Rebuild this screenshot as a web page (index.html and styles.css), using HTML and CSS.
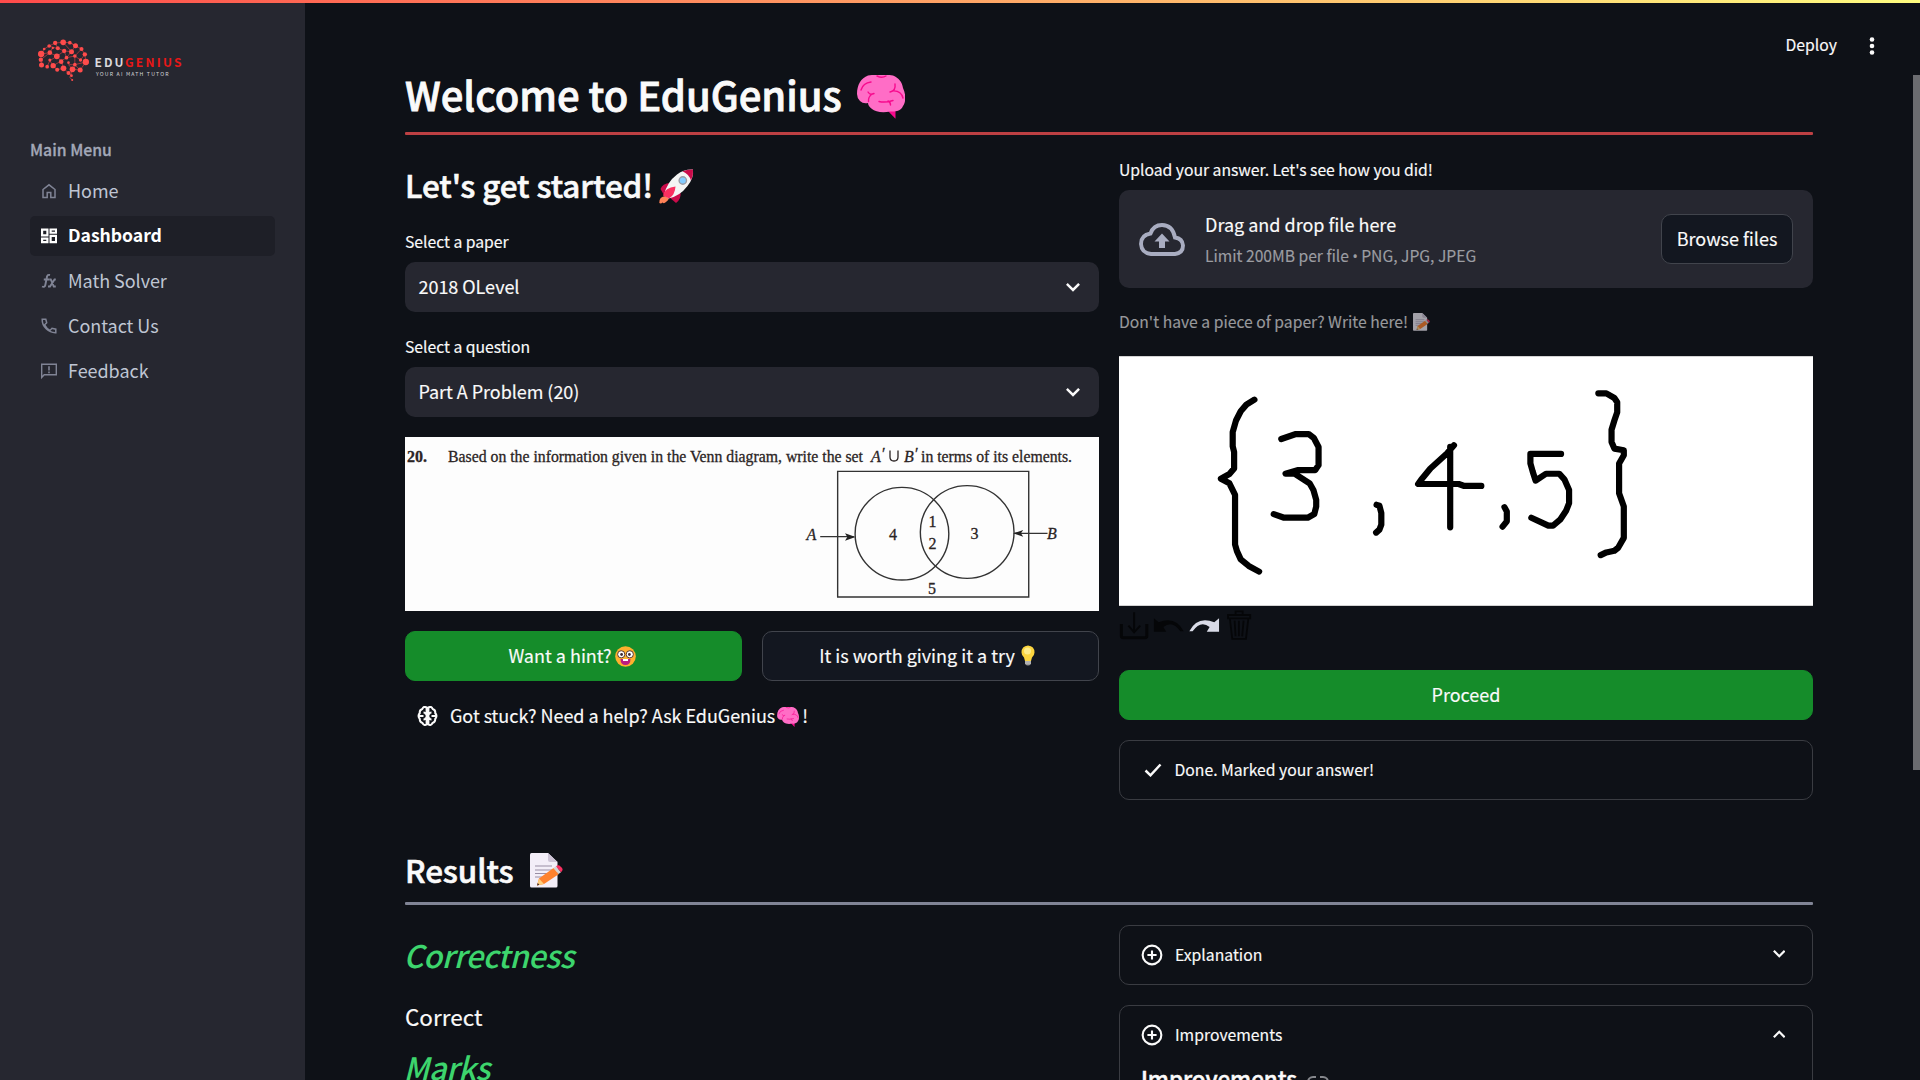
FILE: index.html
```html
<!DOCTYPE html>
<html lang="en">
<head>
<meta charset="utf-8">
<title>EduGenius</title>
<link rel="stylesheet" href="styles.css">
</head>
<body>
<svg class="defs" aria-hidden="true">
  <symbol id="brain" viewBox="0 0 48 44">
    <path d="M30 35l8.500 8.800V34z" fill="#f70a8d"/>
    <path d="M0 19C0 10 4 3 11 .5Q24-1.500 36 .5C42 3 45 7 46 13C49 19 49 27 46 31C44 36 38 37 33 36.500C26 38 18 37 15 34Q11 31 11 28Q6 29 3 26Q0 23 0 19Z" fill="#ff6dc6"/>
    <g fill="none" stroke="#f70a8d" stroke-width="1.400" stroke-linecap="round"><path d="M4 15Q6 8 14 7M20 1q5 2.500 9 0M11 17q2 3.500 6 1.500M15 19q-4 3-3.500 7.500M38 9q1 7-5 8M35 16q9-1 11 7M22 26.500q6 1.500 14-1M31 26q2.500 1 2.500 4"/></g>
  </symbol>
  <symbol id="memo" viewBox="0 0 33 35">
    <path d="M1.500 0H18l9.500 9v24q0 1.500-1.500 1.500H1.500Q0 34.500 0 33V1.500Q0 0 1.500 0z" fill="#f3eef8"/>
    <path d="M18 0l9.500 9H20q-2 0-2-2z" fill="#cdc4d6"/>
    <path d="M5 13h17M5 17h17M5 20.500h14M5 24h9" stroke="#998ea4" stroke-width="1"/>
    <path d="M7 32.500l2-7L23.500 15l5.500 6L14 31z" fill="#ff822d"/><path d="M7 32.500l2-7 5 5.500z" fill="#ffce7c"/><path d="M7 32.500l.7-2.500 1.700 1.800z" fill="#402a32"/>
    <path d="M23.500 15l2.500-1.800 5 6L28.500 21z" fill="#d3d3d3"/><path d="M26 13.200q2.500-2 4.500.2 4 3 .5 5.800z" fill="#f92f60"/>
  </symbol>
  <symbol id="plus" viewBox="0 0 24 24"><circle cx="12" cy="12" r="10.200" fill="none" stroke="#fafafa" stroke-width="2.300"/><path d="M12 7v10M7 12h10" stroke="#fafafa" stroke-width="2.300"/></symbol>
  <symbol id="chev" viewBox="0 0 14 9"><path d="M1.800 1.800L7 7l5.200-5.200" fill="none" stroke="#fafafa" stroke-width="2.500" stroke-linecap="square"/></symbol>
</svg>
<div class="strip"></div>
<div class="app">
  <aside class="sidebar">
    <svg class="logo" viewBox="0 0 150 50">
      <svg x="0" y="0" width="56" height="50" viewBox="48.500 16 168 150">
        <path d="M64 73L73 58L88 49L106 40L130 38L150 39L167 48L185 58L195 74L198 97L181 121L158 119L150 143L156 150M64 73L90 69L111 80L133 64L155 66L130 38M63 90L90 69L99 53L88 49M65 106L63 90M82 111L90 93L111 80L124 94L140 84L133 64L114 56L106 40M100 108L124 94L131 116L112 120L100 108L90 93M155 66L140 84L165 79L185 58M165 79L165 105L181 121M146 130L158 119L146 105L165 105L198 97M165 79L182 91L195 74M131 116L146 130L155 138M155 66L167 48L150 39M114 56L99 53" fill="none" stroke="#d94043" stroke-width="1.900"/>
        <g fill="#ff4b4b"><circle cx="64" cy="73" r="9.500"/><circle cx="73" cy="58" r="4"/><circle cx="88" cy="49" r="5.500"/><circle cx="106" cy="40" r="6.500"/><circle cx="130" cy="38" r="8.500"/><circle cx="150" cy="39" r="5.500"/><circle cx="167" cy="48" r="7.500"/><circle cx="185" cy="58" r="6"/><circle cx="195" cy="74" r="6.500"/><circle cx="198" cy="97" r="9.500"/><circle cx="181" cy="121" r="7.500"/><circle cx="158" cy="119" r="8.500"/><circle cx="146" cy="130" r="6"/><circle cx="131" cy="116" r="8.500"/><circle cx="112" cy="120" r="6"/><circle cx="100" cy="108" r="8"/><circle cx="82" cy="111" r="5.500"/><circle cx="65" cy="106" r="7.500"/><circle cx="63" cy="90" r="6.500"/><circle cx="90" cy="69" r="7"/><circle cx="99" cy="55" r="3.500"/><circle cx="114" cy="56" r="6"/><circle cx="133" cy="64" r="6.500"/><circle cx="155" cy="66" r="7.500"/><circle cx="111" cy="80" r="8.500"/><circle cx="90" cy="91" r="4.500"/><circle cx="124" cy="96" r="7"/><circle cx="140" cy="84" r="5.500"/><circle cx="165" cy="79" r="5.500"/><circle cx="182" cy="91" r="5"/><circle cx="165" cy="105" r="5.500"/><circle cx="146" cy="99" r="4"/><circle cx="155" cy="138" r="4"/><circle cx="157" cy="151" r="3"/></g>
      </svg>
      <text class="brand" x="58.500" y="32" textLength="29" fill="#d9d9dc">EDU</text>
      <text class="brand" x="89" y="32" textLength="56.500" fill="#e81717">GENIUS</text>
      <text class="tag" x="60" y="41" textLength="72.500">YOUR AI MATH TUTOR</text>
    </svg>
    <div class="menu-title">Main Menu</div>
    <nav class="menu">
      <a class="item"><svg viewBox="0 0 18 18"><path d="M3 7.500L9 2.800l6 4.700v8h-4.200v-5H7.200v5H3z" fill="none" stroke="currentColor" stroke-width="1.500"/></svg>Home</a>
      <a class="item active"><svg viewBox="0 0 18 18"><path fill-rule="evenodd" fill="currentColor" d="M1 1.500h7.500v8H1zM3.200 3.700v3.600h3.100v-3.600zM9.500 1.500H17v5.200H9.500zM11.700 3.500v1.200H15V3.500zM1 10.500h7.500v5.700H1zM3.200 12.700v1.300h3.100v-1.300zM9.500 7.800H17v8.400H9.500zM11.700 10v4H15v-4z"/></svg><span>Dashboard</span></a>
      <a class="item"><svg viewBox="0 0 18 18"><path d="M2 14.500q2.800 1.200 3.300-1.500L7 4.800Q7.400 2.300 10 3M3.800 7.500H9M9.200 7.500h1.600l3 7h2M15.800 7.500h-1.300l-4.500 7H8" fill="none" stroke="currentColor" stroke-width="1.900"/></svg>Math Solver</a>
      <a class="item"><svg viewBox="0 0 18 18"><path d="M2.200 2.200h3.600l.9 3.600-2.100 2q1.800 3.700 5.400 5.600l2-2.100 3.800.9v3.500C8.500 16 2 9.500 2.200 2.200z" fill="none" stroke="currentColor" stroke-width="1.500"/></svg>Contact Us</a>
      <a class="item"><svg viewBox="0 0 18 18"><path d="M1.700 15.500V2.200h14.600v10.600H4.200z" fill="none" stroke="currentColor" stroke-width="1.400"/><path d="M9 4.200v4.300M9 9.500v1.700" stroke="currentColor" stroke-width="1.600"/></svg>Feedback</a>
    </nav>
  </aside>
  <main class="main">
    <header class="toolbar"><span>Deploy</span><svg viewBox="0 0 6 20"><circle cx="3" cy="3.500" r="2.300"/><circle cx="3" cy="10" r="2.300"/><circle cx="3" cy="16.500" r="2.300"/></svg></header>
    <div class="content">
      <h1>Welcome to EduGenius <svg class="e-title"><use href="#brain"/></svg></h1>
      <div class="rule red"></div>
      <div class="cols">
        <section class="col">
          <h2 class="start">Let's get started!<svg class="e-rocket" viewBox="0 0 35 35"><path d="M6.500 27Q0 27.500 .3 34Q2 35 3.500 33.500Q5 35 7 33Q10 31 10 28z" fill="#ff8257"/><path d="M1.500 20Q3.500 14.500 11 14L9 24 5 26z" fill="#ca0b4a"/><path d="M10 28L21.500 23Q22.500 30 17 34z" fill="#ca0b4a"/><path d="M5 26Q8 13 18 5.500Q25 0 34 .5Q35 9 28.500 17Q21 27 9.500 29.500z" fill="#f4f4f4"/><path d="M23.500 2.200Q28.500 .2 34 .5Q34.700 6 32 11.500Q30 5 23.500 2.200z" fill="#ca0b4a"/><path d="M4 26.500Q6 18.500 16.500 17.500Q16 26 10 29.500z" fill="#f92f60"/><circle cx="23.800" cy="11.500" r="3.700" fill="#83cbff" stroke="#9a9ca5" stroke-width="1.400"/></svg></h2>
          <label>Select a paper</label>
          <div class="select">2018 OLevel<svg><use href="#chev"/></svg></div>
          <label class="second">Select a question</label>
          <div class="select">Part A Problem (20)<svg><use href="#chev"/></svg></div>
          <svg class="question" width="694" height="174">
            <svg width="694" height="174" viewBox="33 351 1511 522" preserveAspectRatio="none">
              <g class="ink"><path d="M975 454H1391V831H975z"/><ellipse cx="1115" cy="641" rx="102" ry="139"/><ellipse cx="1257" cy="636" rx="102" ry="139"/><path d="M937 650H1010M1360 640H1432"/></g>
              <path d="M1014 651l-23-11 5 11-5 11zM1357 640l22-10-5 10 5 10z" fill="#222"/>
            </svg>
            <text x="2" y="24.500" font-weight="bold" textLength="20">20.</text>
            <text x="43" y="24.500" textLength="415" lengthAdjust="spacingAndGlyphs">Based on the information given in the Venn diagram, write the set</text>
            <text x="466" y="24.500" font-style="italic">A</text><text x="477" y="21.500">′</text><path d="M485 13.500v6.500q0 4 4 4t4-4v-6.500" fill="none" stroke="#2b2424" stroke-width="1.300"/><text x="499" y="24.500" font-style="italic">B</text><text x="510" y="21.500">′</text>
            <text x="516" y="24.500" textLength="151" lengthAdjust="spacingAndGlyphs">in terms of its elements.</text>
            <g><text x="401.500" y="102.500" font-style="italic">A</text><text x="642" y="102" font-style="italic">B</text><text x="484" y="103">4</text><text x="523.500" y="90">1</text><text x="523.500" y="112">2</text><text x="565.500" y="102">3</text><text x="523" y="157">5</text></g>
          </svg>
          <div class="buttons">
            <button class="btn green">Want a hint?<svg class="e-nerd" viewBox="0 0 21 21"><circle cx="10.500" cy="10.500" r="10.300" fill="#ffb02e"/><path d="M5.500 13h10q0 6-5 6t-5-6z" fill="#bb1d80"/><path d="M8 13h5v2H8z" fill="#fff"/><circle cx="6.200" cy="8.300" r="3.600" fill="#fff" stroke="#5c3b2e" stroke-width="1"/><circle cx="14.800" cy="8.300" r="3.600" fill="#fff" stroke="#5c3b2e" stroke-width="1"/><circle cx="6.600" cy="8.500" r="1.400" fill="#402a32"/><circle cx="14.400" cy="8.500" r="1.400" fill="#402a32"/></svg></button>
            <button class="btn try">It is worth giving it a try<svg class="e-bulb" viewBox="0 0 14 21"><path d="M4 14h6v5q-3 3-6 0z" fill="#9b9b9b"/><path d="M4 16h6M4 18h6" stroke="#d3d3d3" stroke-width=".8"/><path d="M7 .5Q13.500 1 13.500 7.500Q13.500 10 11 12.500L10 16H4L3 12.500Q.5 10 .5 7.500Q.5 1 7 .5z" fill="#fcd53f"/><circle cx="6.500" cy="6" r="3.500" fill="#ffec8a"/></svg></button>
          </div>
          <div class="stuck"><svg class="i-brain" viewBox="0 0 20 20"><path d="M9.100 1.500Q6-.2 4.800 3Q1.800 4 2.300 7Q-.2 10 2.300 13Q2 16 5 17Q6.500 20 9.100 18.500zM10.900 1.500Q14-.2 15.200 3Q18.200 4 17.700 7Q20.200 10 17.700 13Q18 16 15 17Q13.500 20 10.900 18.500zM6 6.500q2 0 2.500 2M6 13.500q2 0 2.500-2M2 10h4M14 6.500q-2 0-2.500 2M14 13.500q-2 0-2.500-2M18 10h-4" fill="none" stroke="#fafafa" stroke-width="2"/></svg><span>Got stuck? Need a help? Ask EduGenius</span><svg class="e-small"><use href="#brain"/></svg><span>!</span></div>
        </section>
        <section class="col">
          <label class="upload-label">Upload your answer. Let's see how you did!</label>
          <div class="drop">
            <svg class="i-cloud" viewBox="0 0 46 33"><path d="M12 31H36Q44 30 44 22.500Q43.500 15.500 36 14.500Q33.500 2 23 2Q14.500 2 11.500 10.500Q2 12 2 21Q2.500 30 12 31z" fill="none" stroke="#a9adc1" stroke-width="3.900"/><path d="M23 10.500l7.500 8H26v6.500h-6v-6.500h-4.500z" fill="#a9adc1"/></svg>
            <div class="drop-text"><div>Drag and drop file here</div><small>Limit 200MB per file <b>•</b> PNG, JPG, JPEG</small></div>
            <button class="btn browse">Browse files</button>
          </div>
          <div class="caption"><span>Don't have a piece of paper? Write here!</span><svg class="e-memo-s"><use href="#memo"/></svg></div>
          <svg class="canvas" viewBox="40 48 1471 750" preserveAspectRatio="none">
            <path d="M327 177L310 192L298 212L288 240L281 275V318L284 335V385L274 402L256 416L274 430L286 465V615L290 635L298 660L315 680L337 697M384 296L415 281H442L453 293L463 320V375L456 390H420L393 401H412L444 430L452 450L458 480V500L454 523L440 534H390L368 523M586 495L592 498L596 520V555L592 570L585 579M750 315L735 340L700 385L680 420L674 432H760L772 438H808M742 320V563M857 502L862 515V545L853 561M977 341H912V370L917 395L923 422L945 401H973L984 418L994 450V490L988 512L975 540L960 558H950L914 534M1056 158H1073L1090 172L1096 185V215L1090 240L1084 268V305L1090 325L1110 330V345L1100 370V460L1110 500V595L1098 625L1090 634L1073 639L1061 647"/>
          </svg>
          <div class="tools">
            <svg viewBox="40 810 285 100" preserveAspectRatio="none"><g class="tool"><path d="M45 855V891Q45 896 49 896H95Q99 896 99 891V855" stroke-width="3"/><path d="M72 820V878M60 860L72 880L85 860" stroke-width="2"/></g><path d="M114 838L124 850Q160 830 177 877H170Q153 842 134 864L140 878H114z" fill="#050608"/><path d="M252 838L242 850Q206 830 189 877H196Q213 842 232 864L226 878H252z" fill="#d9dbe7"/><g class="tool"><path d="M271 828H318V838H271zM287 826V817H302V826M275 840L280 900H309L314 840M285 845L287 892M294 845V892M304 845L301 892" stroke-width="1.800"/></g></svg>
          </div>
          <button class="btn green wide">Proceed</button>
          <div class="box status"><svg class="i-check" viewBox="0 0 18 14"><path d="M1.500 7.500L6.500 12.300 16.500 1.500" fill="none" stroke="#fafafa" stroke-width="2.500"/></svg>Done. Marked your answer!</div>
        </section>
      </div>
      <h2 class="results">Results <svg class="e-memo"><use href="#memo"/></svg></h2>
      <div class="rule"></div>
      <div class="cols">
        <section class="col">
          <h2 class="mark">Correctness</h2>
          <p>Correct</p>
          <h2 class="mark">Marks</h2>
        </section>
        <section class="col">
          <div class="box"><svg class="i-plus"><use href="#plus"/></svg>Explanation<svg class="arrow"><use href="#chev"/></svg></div>
          <div class="box open"><div class="head"><svg class="i-plus"><use href="#plus"/></svg>Improvements<svg class="arrow up"><use href="#chev"/></svg></div>
            <h3>Improvements<svg viewBox="0 0 24 14"><path d="M10 2H7a5 5 0 0 0 0 10h3M14 2h3a5 5 0 0 1 0 10h-3M8 7h8" fill="none" stroke="#85878c" stroke-width="2"/></svg></h3></div>
        </section>
      </div>
    </div>
  </main>
</div>
<div class="scroll"></div>
</body>
</html>
```
FILE: styles.css
```css
* { box-sizing: border-box; }
body { margin: 0; height: 1080px; overflow: hidden; background: #0e1117; color: #fafafa; font: 18px/1.4 "Noto Sans CJK SC", sans-serif; -webkit-text-stroke: .15px; }
svg { flex: none; display: block; }
.defs { position: absolute; width: 0; height: 0; }
.strip { position: absolute; top: 0; left: 0; right: 0; height: 3px; background: linear-gradient(90deg, #ff4b4b, #fffd80); }
.scroll { position: absolute; right: 0; top: 75px; width: 7px; height: 695px; background: #6b6c70; }
.app { display: flex; height: 1080px; overflow: hidden; }
.sidebar { width: 305px; flex: none; background: #262730; padding: 35px 30px 0; }
.logo { width: 150px; height: 50px; margin-left: 5.5px; }
.brand { font-size: 12px; font-weight: 700; }
.tag { font-size: 5.2px; fill: #d5d5d9; }
.menu-title { margin-top: 55px; height: 20px; line-height: 20px; font-size: 15.8px; font-weight: 500; color: #a3a8b8; -webkit-text-stroke: .3px; }
.menu { display: flex; flex-direction: column; gap: 5px; margin-top: 11px; }
.item { display: flex; align-items: center; gap: 10px; height: 40px; padding: 0 10px; border-radius: 5px; color: #bfc5d3; letter-spacing: -.04px; -webkit-text-stroke: 0; }
.item svg { width: 18px; height: 18px; color: #808495; }
.item.active { background: #1e1f27; color: #fff; font-weight: 700; font-size: 17.6px; }
.item.active svg { color: #fff; }
.item.active span { margin-top: -2px; }
.main { flex: 1; }
.toolbar { display: flex; justify-content: flex-end; align-items: flex-start; gap: 31px; height: 75px; padding: 16px 45px 0 0; font-size: 15.75px; }
.toolbar span { height: 58px; line-height: 58px; }
.toolbar svg { width: 6px; height: 20px; margin: 19.5px 0 0 1px; fill: #fafafa; }
.content { margin-left: 100px; width: 1408px; }
h1, h2, h3, p { margin: 0; font-weight: 500; }
h1 { display: flex; height: 57px; line-height: 38px; font-size: 40px; letter-spacing: -.04px; -webkit-text-stroke: .8px; }
.e-title { width: 48px; height: 44px; margin-left: 15.5px; }
.rule { height: 3px; background: #808495; border-radius: 1px; }
.rule.red { background: #bd4043; }
.cols { display: flex; gap: 20px; margin-top: 20px; }
.col { width: 694px; display: flex; flex-direction: column; }
h2 { display: flex; align-items: center; height: 58px; font-size: 31.4px; letter-spacing: -.08px; -webkit-text-stroke: .6px; }
h2.start { padding-top: 2px; }
.e-rocket { width: 35px; height: 35px; margin: 2px 0 0 6px; }
label { height: 26px; line-height: 26px; font-size: 15.75px; letter-spacing: -.03px; margin: 16px 0 7px; }
label.second { margin-top: 22px; }
label.upload-label { margin-top: 2px; }
.select { display: flex; align-items: center; justify-content: space-between; height: 50px; padding: 0 19px 0 13.5px; border-radius: 10px; background: #262730; letter-spacing: -.04px; }
.select svg { width: 14px; height: 9px; }
.question { margin-top: 20px; background: #fdfdfd; font: 16px "Liberation Serif", serif; fill: #2b2424; }
.question text { stroke: #2b2424; stroke-width: .3px; }
.ink { fill: none; stroke: #333; stroke-width: 1.4; }
.ink * { vector-effect: non-scaling-stroke; }
.buttons { display: grid; grid-template-columns: 337px 337px; gap: 20px; margin-top: 20px; }
.btn { display: flex; align-items: center; justify-content: center; height: 50px; border: 1px solid #41444c; border-radius: 10px; background: #131720; color: #fafafa; font: inherit; padding: 0; }
.btn.green { background: #158c2a; border-color: #158c2a; padding-right: 3px; }
.btn.wide { padding: 0; }
.btn.try { padding-right: 7px; }
.e-nerd { width: 21px; height: 21px; margin-left: 3px; }
.e-bulb { width: 14px; height: 21px; margin: -2px 0 0 6px; }
.stuck { display: flex; align-items: center; height: 40px; margin-top: 15px; padding-left: 12px; letter-spacing: -.04px; }
.i-brain { width: 21px; height: 20px; margin-right: 12px; }
.e-small { width: 22px; height: 20px; margin: 2px 3px 0 2px; }
.drop { display: flex; align-items: center; height: 98px; padding: 0 20px; border-radius: 10px; background: #262730; }
.i-cloud { width: 46px; height: 33px; }
.drop-text { flex: 1; margin: 3px 0 0 20px; line-height: 29px; }
.drop-text small { display: block; font-size: 15.65px; color: #9c9da2; line-height: 33px; }
.drop-text b { font: 14px "Noto Sans", sans-serif; line-height: 1; }
.browse { flex: none; width: 132px; }
.caption { display: flex; align-items: center; height: 26px; margin: 20px 0 22px; font-size: 15.7px; color: #98999c; }
.caption span { margin-top: 2px; }
.e-memo-s { width: 17px; height: 18px; margin: 2px 0 0 5px; opacity: .65; }
.canvas { width: 694px; height: 250px; background: #fff; border: 1px solid #d3d3d3; border-width: 1px 0; }
.canvas path { fill: none; stroke: #000; stroke-width: 6.2px; stroke-linecap: round; stroke-linejoin: round; vector-effect: non-scaling-stroke; }
.tools { height: 64px; padding-top: 3px; }
.tools svg { width: 134.5px; height: 33.3px; }
.tool { fill: none; stroke: #050608; }
.tool * { vector-effect: non-scaling-stroke; }
.box { display: flex; align-items: center; height: 60px; margin-bottom: 20px; padding: 0 21px; border: 1px solid #3a3c42; border-radius: 10px; font-size: 15.75px; }
.status { margin: 20px 0 0; padding-left: 23.5px; letter-spacing: -.02px; }
.i-check { width: 18px; height: 14px; margin-right: 13px; }
.results { margin-top: 38px; height: 64px; padding-bottom: 1px; }
.e-memo { width: 33px; height: 35px; margin: 2px 0 0 16px; }
.mark { font-size: 31px; font-style: italic; color: #3dd56d; letter-spacing: -.55px; padding-top: 1px; margin-left: -1.5px; -webkit-text-stroke: 0; }
p { height: 32px; line-height: 32px; margin: 17px 0 5px; font-size: 22.5px; font-weight: 400; }
.i-plus { width: 22px; height: 22px; margin-right: 12px; }
.arrow { width: 12.5px; height: 8px; margin: -2px 6px 0 auto; }
.arrow.up { transform: rotate(180deg); }
.box.open { display: block; height: 300px; }
.head { display: flex; align-items: center; height: 58px; }
h3 { display: flex; align-items: center; height: 30px; font-size: 22.4px; letter-spacing: -.05px; -webkit-text-stroke: .5px; }
h3 svg { width: 24px; height: 14px; margin: 5px 0 0 9px; }
```
